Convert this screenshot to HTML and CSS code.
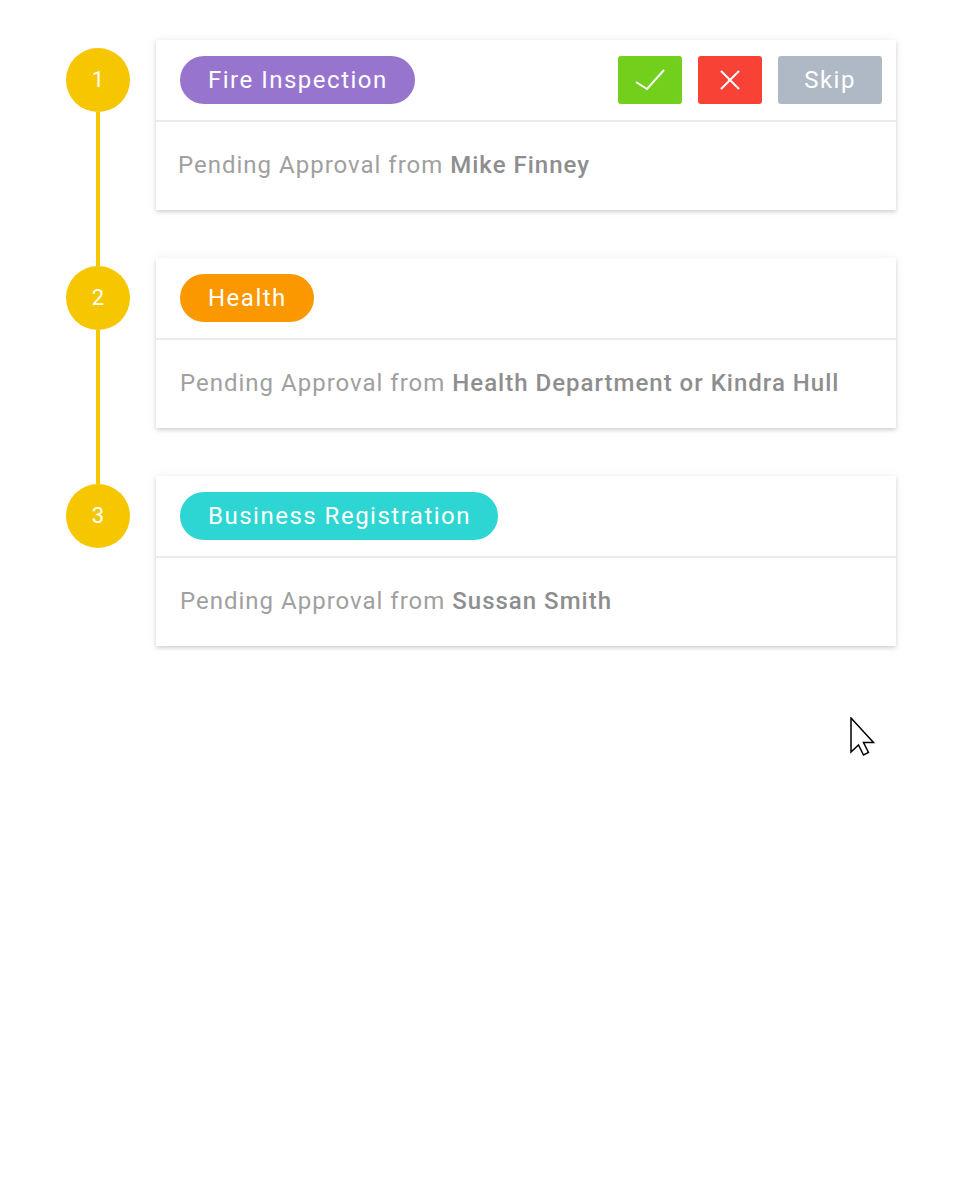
FILE: index.html
```html
<!DOCTYPE html>
<html lang="en">
<head>
    <meta charset="UTF-8">
    <meta name="viewport" content="width=device-width, initial-scale=1.0">
    <title>Approval Steps</title>
    <link rel="stylesheet" href="styles.css">
</head>
<body>
    <div class="steps">
        <div class="step">
            <div class="marker">
                <div class="circle">1</div>
                <div class="line"></div>
            </div>
            <div class="card">
                <div class="card-header">
                    <span class="pill pill-purple">Fire Inspection</span>
                    <div class="actions">
                        <button class="btn btn-approve" aria-label="Approve">
                            <svg width="30" height="22" viewBox="0 0 30 22"><polyline points="1,13 12,20 29,1" fill="none" stroke="#fff" stroke-width="2"/></svg>
                        </button>
                        <button class="btn btn-reject" aria-label="Reject">
                            <svg width="20" height="20" viewBox="0 0 20 20"><path d="M1 1 L19 19 M19 1 L1 19" fill="none" stroke="#fff" stroke-width="2"/></svg>
                        </button>
                        <button class="btn btn-skip">Skip</button>
                    </div>
                </div>
                <div class="card-body first">Pending Approval from <b>Mike Finney</b></div>
            </div>
        </div>

        <div class="step">
            <div class="marker">
                <div class="circle">2</div>
                <div class="line"></div>
            </div>
            <div class="card">
                <div class="card-header">
                    <span class="pill pill-orange">Health</span>
                </div>
                <div class="card-body">Pending Approval from <b>Health Department or Kindra Hull</b></div>
            </div>
        </div>

        <div class="step">
            <div class="marker">
                <div class="circle">3</div>
            </div>
            <div class="card">
                <div class="card-header">
                    <span class="pill pill-teal">Business Registration</span>
                </div>
                <div class="card-body">Pending Approval from <b>Sussan Smith</b></div>
            </div>
        </div>
    </div>

    <!-- mouse pointer over the page -->
    <svg class="cursor" width="26" height="40" viewBox="0 0 26 40">
        <path d="M1 1 L1 35 L8.5 28 L13.5 38 L18.5 35.5 L13.5 25.5 L23.5 25.5 Z" fill="#fff" stroke="#000" stroke-width="1.5" stroke-linejoin="miter"/>
    </svg>
</body>
</html>
```

FILE: styles.css
```css
body {
    margin: 0;
    padding: 0;
    background-color: #fff;
    font-family: Roboto, "Noto Sans", Arial, sans-serif;
    position: relative;
    min-height: 1200px;
}

.steps {
    padding: 40px 0 0 66px;
    display: flex;
    flex-direction: column;
    gap: 48px;
}

.step {
    display: flex;
    align-items: stretch;
}

.marker {
    width: 90px;
    display: flex;
    flex-direction: column;
}

.circle {
    width: 64px;
    height: 64px;
    margin-top: 8px;
    border-radius: 50%;
    background-color: #f6c700;
    color: #fff;
    font-size: 22px;
    line-height: 64px;
    text-align: center;
}

.line {
    flex: 1;
    width: 4px;
    margin-left: 30px;
    margin-bottom: -56px;
    background-color: #f6c700;
}

.card {
    width: 740px;
    background-color: #fff;
    box-shadow: 0 2px 4px rgba(0, 0, 0, 0.16), 0 0 12px rgba(0, 0, 0, 0.05);
}

.card-header {
    display: flex;
    align-items: center;
    justify-content: space-between;
    padding: 16px 14px 16px 24px;
    border-bottom: 2px solid #ebebeb;
}

.pill {
    display: inline-block;
    height: 48px;
    line-height: 48px;
    padding: 0 27px 0 28px;
    border-radius: 24px;
    color: #fff;
    font-size: 24px;
    letter-spacing: 1.5px;
}

.pill-purple {
    background-color: #9775ce;
}

.pill-orange {
    background-color: #fb9800;
}

.pill-teal {
    background-color: #2dd6d2;
}

.actions {
    display: flex;
    gap: 16px;
}

.btn {
    height: 48px;
    width: 64px;
    border: none;
    border-radius: 3px;
    padding: 0;
    display: flex;
    align-items: center;
    justify-content: center;
    color: #fff;
    font-family: inherit;
    font-size: 24px;
    letter-spacing: 1.5px;
    cursor: pointer;
}

.btn-approve {
    background-color: #72cf1b;
}

.btn-reject {
    background-color: #f84236;
}

.btn-skip {
    width: 104px;
    background-color: #afb9c6;
}

.card-body {
    padding: 29px 24px 31px;
    line-height: 28px;
    font-size: 24px;
    letter-spacing: 1px;
    color: #a0a0a0;
}

.card-body.first {
    padding-left: 22px;
}

.card-body b {
    font-weight: 500;
    color: #8e8e8e;
}

.cursor {
    position: absolute;
    left: 850px;
    top: 717px;
}
```
